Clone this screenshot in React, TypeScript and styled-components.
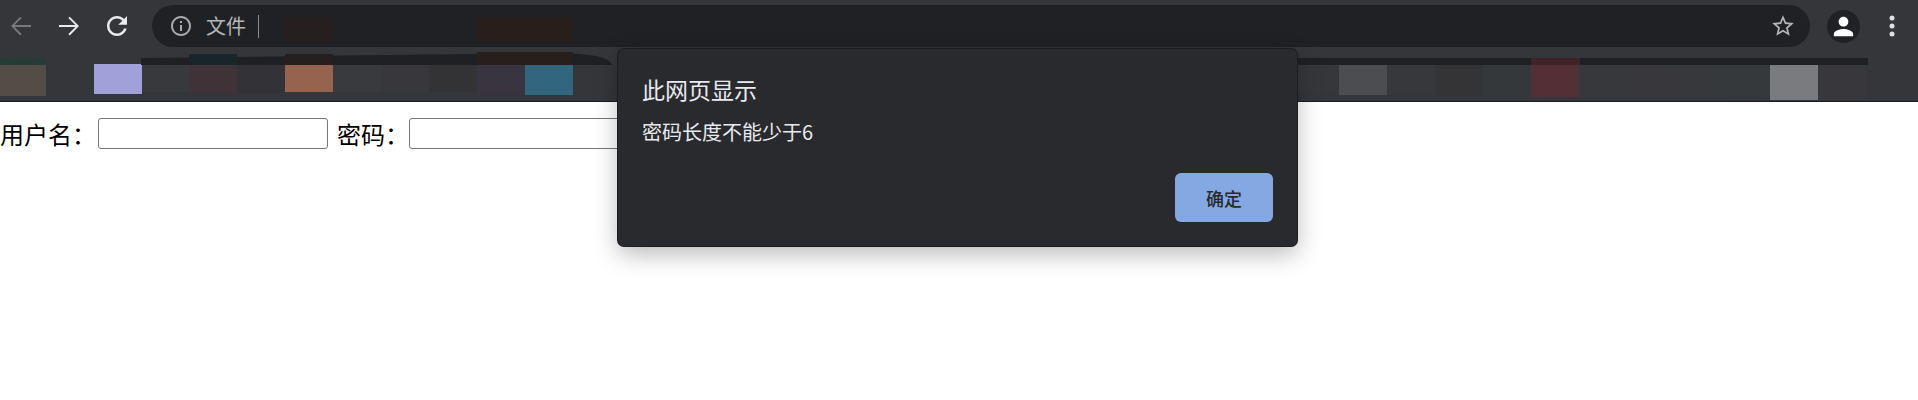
import styled, { createGlobalStyle } from "styled-components";

const cjk = `"Noto Sans CJK SC", "Noto Sans", sans-serif`;

// bookmark cells that got painted over in the screenshot, by column
const cells: Record<number, { color: string; height?: number }> = {
  0: { color: "#544c46", height: 32 },
  2: { color: "#a1a1d9", height: 30 },
  3: { color: "#38393d", height: 28 },
  4: { color: "#403338", height: 29 },
  5: { color: "#333337", height: 29 },
  6: { color: "#96634e", height: 28 },
  7: { color: "#383a3d", height: 28 },
  8: { color: "#38383c", height: 28 },
  9: { color: "#333336", height: 28 },
  10: { color: "#383541", height: 30 },
  11: { color: "#32667f", height: 31 },
  27: { color: "#36373b", height: 28 },
  28: { color: "#4c4d51", height: 31 },
  29: { color: "#36383b", height: 31 },
  30: { color: "#343336", height: 32 },
  31: { color: "#35383b", height: 32 },
  32: { color: "#552f36", height: 33 },
  33: { color: "#36383b", height: 33 },
  34: { color: "#38373b", height: 33 },
  35: { color: "#37383c", height: 33 },
  36: { color: "#35393b", height: 33 },
  37: { color: "#7a7b7e", height: 36 },
  38: { color: "#38383c", height: 36 },
};

const App = () => {
  return (
    <>
      <GlobalStyle />
      <Browser>
        <Toolbar>
          <NavGroup>
            <NavButton $dim>
              <svg width="30" height="30" viewBox="0 0 24 24" fill="currentColor">
                <path d="M20 11.2H6.9l5.6-5.6L11.4 4.5 4 12l7.4 7.5 1.1-1.1-5.6-5.6H20z" />
              </svg>
            </NavButton>
            <NavButton>
              <svg width="30" height="30" viewBox="0 0 24 24" fill="currentColor">
                <path d="M4 11.2h13.1l-5.6-5.6 1.1-1.1L20 12l-7.4 7.5-1.1-1.1 5.6-5.6H4z" />
              </svg>
            </NavButton>
            <NavButton>
              <svg width="30" height="30" viewBox="0 0 24 24" fill="currentColor">
                <path d="M17.65 6.35C16.2 4.9 14.21 4 12 4c-4.42 0-7.99 3.58-7.99 8s3.57 8 7.99 8c3.73 0 6.84-2.55 7.73-6h-2.08c-.82 2.33-3.04 4-5.65 4-3.31 0-6-2.69-6-6s2.69-6 6-6c1.66 0 3.14.69 4.22 1.78L13 11h7V4l-2.35 2.35z" />
              </svg>
            </NavButton>
          </NavGroup>
          <Omnibox>
            <SiteIcon width="24" height="24" viewBox="0 0 24 24" fill="currentColor">
              <path d="M11 7h2v2h-2zm0 4h2v6h-2zm1-9C6.48 2 2 6.48 2 12s4.48 10 10 10 10-4.48 10-10S17.52 2 12 2zm0 18c-4.41 0-8-3.59-8-8s3.59-8 8-8 8 3.59 8 8-3.59 8-8 8z" />
            </SiteIcon>
            <SiteLabel>文件</SiteLabel>
            <Caret />
            <UrlSmudge $left={285} $width={48} $color="#261f20" />
            <UrlSmudge $left={477} $width={96} $color="#271f1c" />
            <StarIcon width="26" height="26" viewBox="0 0 24 24" fill="currentColor">
              <path d="M22 9.24l-7.19-.62L12 2 9.19 8.63 2 9.24l5.46 4.73L5.82 21 12 17.27 18.18 21l-1.63-7.03L22 9.24zM12 15.4l-3.76 2.27 1-4.28-3.32-2.88 4.38-.38L12 6.1l1.71 4.04 4.38.38-3.32 2.88 1 4.28L12 15.4z" />
            </StarIcon>
          </Omnibox>
          <Avatar>
            <svg width="29" height="29" viewBox="0 0 24 24" fill="currentColor">
              <path d="M12 12c2.21 0 4-1.79 4-4s-1.79-4-4-4-4 1.79-4 4 1.79 4 4 4zm0 2c-2.67 0-8 1.34-8 4v2h16v-2c0-2.66-5.33-4-8-4z" />
            </svg>
          </Avatar>
          <MenuDots width="6" height="24" viewBox="0 0 6 24" fill="currentColor">
            <circle cx="3" cy="4" r="2.5" />
            <circle cx="3" cy="12" r="2.5" />
            <circle cx="3" cy="20" r="2.5" />
          </MenuDots>
        </Toolbar>
        <BookmarkBar>
          <Smear width="1918" height="20" viewBox="0 0 1918 20">
            <path d="M0 6 Q20 5 46 6 V13 H0 Z" fill="#263a36" />
            <path d="M141 6 Q400 3 560 1 Q610 2 612 13 H141 Z" fill="#1f2024" />
            <path d="M189 2 H237 V13 H189 Z" fill="#182529" />
            <path d="M285 2 H333 V13 H285 Z" fill="#251f20" />
            <path d="M477 0 H573 L574 13 H477 Z" fill="#271f1b" />
            <path d="M1296 6 H1868 V13 H1296 Z" fill="#1f2024" />
            <path d="M1531 6 H1580 V13 H1531 Z" fill="#3f2329" />
          </Smear>
          <CellGrid>
            {Array.from({ length: 40 }, (_, i) => (
              <Cell key={i} $color={cells[i]?.color} $height={cells[i]?.height} />
            ))}
          </CellGrid>
        </BookmarkBar>
        <Page>
          <FieldLabel>用户名：</FieldLabel>
          <TextInput />
          <FieldLabel $spaced>密码：</FieldLabel>
          <TextInput />
        </Page>
        <Dialog>
          <DialogTitle>此网页显示</DialogTitle>
          <DialogMessage>密码长度不能少于6</DialogMessage>
          <DialogFooter>
            <ConfirmButton>确定</ConfirmButton>
          </DialogFooter>
        </Dialog>
      </Browser>
    </>
  );
};

export default App;

const GlobalStyle = createGlobalStyle`
  html, body {
    margin: 0;
    padding: 0;
    background: #fff;
    overflow: hidden;
  }
`;

const Browser = styled.div`
  position: relative;
  width: 1918px;
  height: 400px;
  background: #fff;
  font-family: ${cjk};
`;

const Toolbar = styled.div`
  display: flex;
  align-items: center;
  height: 52px;
  background: #35363a;
`;

const NavGroup = styled.div`
  display: flex;
  margin-left: -3px;
`;

const NavButton = styled.div<{ $dim?: boolean }>`
  display: flex;
  align-items: center;
  justify-content: center;
  width: 48px;
  height: 42px;
  color: ${(p) => (p.$dim ? "#77787b" : "#e8eaed")};
`;

const Omnibox = styled.div`
  position: relative;
  display: flex;
  align-items: center;
  width: 1658px;
  height: 42px;
  margin-left: 11px;
  padding: 0 14px 0 17px;
  box-sizing: border-box;
  border-radius: 21px;
  background: #202124;
`;

const SiteIcon = styled.svg`
  color: #a9aaad;
  flex-shrink: 0;
`;

const SiteLabel = styled.span`
  margin-left: 13px;
  font-size: 20px;
  line-height: 24px;
  color: #b4b5b8;
`;

const Caret = styled.span`
  width: 1px;
  height: 23px;
  margin-left: 12px;
  background: #8a8b8e;
`;

const UrlSmudge = styled.span<{ $left: number; $width: number; $color: string }>`
  position: absolute;
  top: 12px;
  bottom: 0;
  left: ${(p) => p.$left - 152}px;
  width: ${(p) => p.$width}px;
  height: 25px;
  background: ${(p) => p.$color};
`;

const StarIcon = styled.svg`
  margin-left: auto;
  color: #b3b4b6;
`;

const Avatar = styled.div`
  display: flex;
  align-items: center;
  justify-content: center;
  width: 33px;
  height: 33px;
  margin-left: 17px;
  border-radius: 50%;
  background: #202124;
  color: #fff;
`;

const MenuDots = styled.svg`
  margin-left: 29px;
  color: #dfe0e2;
`;

const BookmarkBar = styled.div`
  position: relative;
  height: 50px;
  padding-top: 12px;
  box-sizing: border-box;
  background: #35363a;
  border-bottom: 1px solid #1b1c1e;
  overflow: hidden;
`;

const Smear = styled.svg`
  position: absolute;
  top: 0;
  left: 0;
`;

const CellGrid = styled.div`
  display: grid;
  grid-template-columns: repeat(40, 47.9px);
  align-items: start;
  margin-left: -2px;
`;

const Cell = styled.div<{ $color?: string; $height?: number }>`
  height: ${(p) => p.$height ?? 31}px;
  background: ${(p) => p.$color ?? "transparent"};
`;

const Page = styled.div`
  display: flex;
  align-items: center;
  padding-top: 16px;
`;

const FieldLabel = styled.span<{ $spaced?: boolean }>`
  width: 96px;
  width: ${(p) => (p.$spaced ? "72px" : "96px")};
  margin-left: ${(p) => (p.$spaced ? "9px" : "0")};
  margin-right: ${(p) => (p.$spaced ? "0" : "2px")};
  font-size: 24px;
  line-height: 31px;
  color: #000;
  white-space: nowrap;
`;

const TextInput = styled.input`
  width: 230px;
  height: 31px;
  padding: 0;
  box-sizing: border-box;
  border: 1.5px solid #767676;
  border-radius: 3px;
  background: #fff;
`;

const Dialog = styled.div`
  position: absolute;
  top: 49px;
  left: 618px;
  display: flex;
  flex-direction: column;
  width: 679px;
  height: 197px;
  padding: 26px 24px 24px;
  box-sizing: border-box;
  border-radius: 6px;
  background: #292a2d;
  box-shadow: 0 0 0 1px #1c1d1f, 0 8px 24px rgba(0, 0, 0, 0.28);
`;

const DialogTitle = styled.div`
  font-size: 23px;
  line-height: 28px;
  color: #e8eaed;
`;

const DialogMessage = styled.div`
  margin-top: 17px;
  font-size: 20px;
  line-height: 24px;
  color: #e8eaed;
`;

const DialogFooter = styled.div`
  display: flex;
  justify-content: flex-end;
  margin-top: auto;
`;

const ConfirmButton = styled.button`
  width: 98px;
  height: 49px;
  padding: 0;
  border: none;
  border-radius: 6px;
  background: #84a9e2;
  color: #292a2d;
  font-family: ${cjk};
  font-size: 18px;
  font-weight: 500;
`;
